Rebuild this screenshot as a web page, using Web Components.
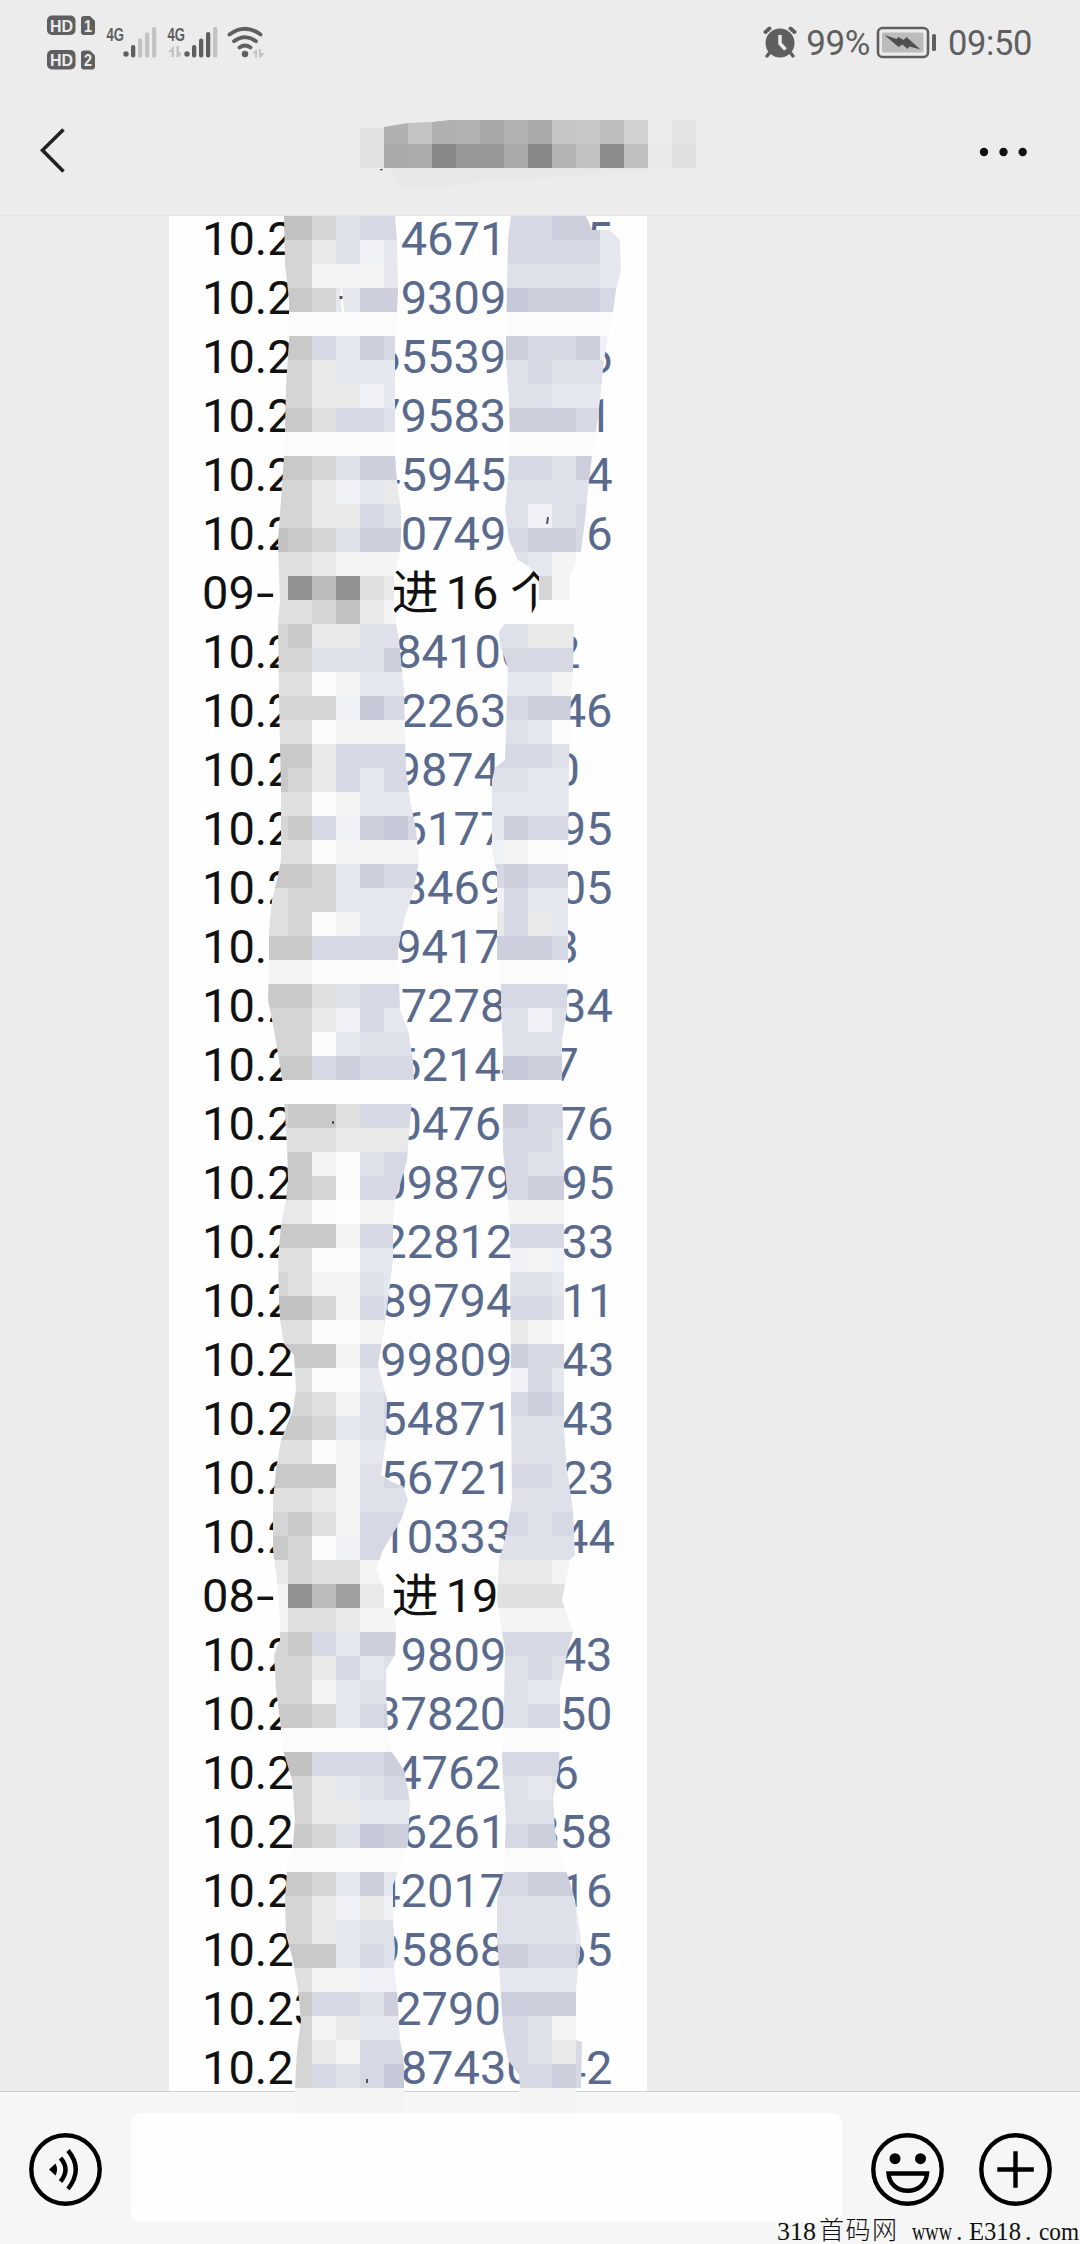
<!DOCTYPE html>
<html lang="zh-CN">
<head>
<meta charset="utf-8">
<meta name="viewport" content="width=device-width">
<title>聊天</title>
<style>
  html, body {
    margin: 0;
    background: #ececec;
  }
</style>
</head>
<body>
<chat-screen></chat-screen>

<script>
// helper: attach an open shadow root filled from a template
function attach(host, html) {
  const template = document.createElement('template')
  template.innerHTML = html
  host.attachShadow({ mode: 'open' }).appendChild(template.content.cloneNode(true))
  return host.shadowRoot
}

// [left text, right part, x of right part, tail, x of tail]
const ROWS = [
  ['10.2', '4671', 400.7, '5', 586.2],
  ['10.2', '9309', 400.7, '', 586],
  ['10.2', '65539', 374.2, '6', 586.2],
  ['10.2', '79583', 374.2, '1', 586.2],
  ['10.2', '45945', 374.2, '4', 586.2],
  ['10.2', '0749', 400.7, '6', 586.2],
  ['09-', '进', 391.5, '16 个', 445.7],
  ['10.2', '84100', 395.2, '2', 554],
  ['10.2', '2263', 400.7, '46', 559.7],
  ['10.2', '9874', 394.5, '0', 553.5],
  ['10.2', '6177', 400.7, '95', 559.7],
  ['10.2', '3469', 400.7, '05', 559.7],
  ['10.2', '9417', 395.2, '3', 552.5],
  ['10.2', '7278', 400.7, '34', 560],
  ['10.2', '62144', 395.2, '7', 552.5],
  ['10.2', '0476', 395.5, '76', 560.5],
  ['10.2', '09879', 380.3, '95', 561.5],
  ['10.2', '22812', 380.3, '33', 561.5],
  ['10.2', '89794', 380.3, '11', 561.5],
  ['10.2', '99809', 380.3, '43', 561.5],
  ['10.2', '54871', 380.3, '43', 561.5],
  ['10.2', '56721', 380.3, '23', 561.5],
  ['10.2', '10333', 380.3, '44', 562],
  ['08-', '进', 391.5, '19', 445.7],
  ['10.2', '9809', 400.7, '43', 559.7],
  ['10.2', '37820', 374.2, '50', 559.7],
  ['10.2', '47620', 395.2, '6', 552.5],
  ['10.2', '6261', 400.7, '858', 533.2],
  ['10.2', '42017', 374.2, '16', 559.7],
  ['10.2', '95868', 374.2, '65', 559.7],
  ['10.23', '2790', 395.2, '', 560],
  ['10.2', '87430', 400.7, '42', 559.7]
]

const COLORS = {
  X: '#929292', Y: '#a0a0a0', Z: '#bcbcbc',
  a: '#c2c2c3', b: '#c9c9ca', c: '#d5d5d6', d: '#e0e0e1', e: '#e9e9ea', f: '#f4f4f5', g: '#fbfbfb', w: '#fefefe',
  A: '#c5c9d7', B: '#cdd0dc', C: '#d6d9e3', D: '#dee1e9', E: '#e6e8ef', F: '#f0f1f6'
}

// one string per 24px line, one letter per 24px cell
const LEFT_STRIP = {
  x: 264,
  cells: 'aacDCCC cceDFEE ccfffEE bbcEBBB ggggggg bbCEBCC cceEEEE cceeFEE bbdCCDD ggggggg bbcDBBB cceFEee cceeCDD abcDBBB ddeffff dXZXdef ddcaeff cbeeDDD ccDDDBB ddgfEEE cccFACC ddgffff bbeCCCC bceCECC ddgfEEE cbCFBAC ddgffff bbcEBCC dccEEEE dcgfEEE bbCCCCC ffggggg bbdDCCC cceFCEE ccgEDDD bbCBCCC wwwwwww cbbdCCC dddeeee cbfgDCC abcgCCB eegwfff bbbfCCC ddggEEE cdffDEE aacfCDD ddggfEE bbbfCDD ddggEEE bcdfDCC bbcEDCC ddgfEEE bbbfDCC ddefDDD cbdfCCC bcgFCCC ecddfff fXZYewg fddefff cbCEBBB cceCEDD ccfEDDD bbcECBB ggggggg aaCCCBB cceEDCD cceeEEE bbcDABB ggggggg bbcEBEE cceFeFF cceEDDD bbbECDD ddffFFF bbCCDBC ccfeEEE ccefCCC ccCDCAA',
  edge: '284,216 285,264 289,300 289,340 286,385 285,430 284,456 281,500 278,540 279,575 280,600 278,620 279,700 281,790 281,860 277,880 272,900 269,930 269,960 268,1000 274,1030 279,1060 283,1085 286,1130 287,1150 288,1180 286,1200 281,1225 278,1260 279,1300 280,1320 284,1344 294,1355 296,1390 293,1410 281,1440 276,1470 273,1500 273,1550 277,1580 280,1620 280,1640 274,1655 276,1690 280,1720 283,1750 292,1780 295,1820 293,1845 287,1870 285,1900 286,1935 293,1960 298,1990 301,2020 297,2050 295,2088 404,2088 404,2060 400,2040 397,1990 394,1968 395,1950 393,1920 393,1885 398,1872 408,1845 410,1800 404,1770 392,1752 388,1730 386,1690 386,1670 395,1655 396,1632 394,1610 385,1590 376,1570 383,1550 401,1520 408,1500 403,1486 392,1482 381,1475 386,1440 387,1400 378,1365 384,1330 388,1300 393,1260 393,1224 395,1200 400,1185 407,1160 411,1110 414,1080 413,1060 408,1030 400,1010 398,950 404,920 414,890 419,860 416,830 410,800 406,770 404,690 399,640 394,610 394,576 400,552 401,540 401,510 398,490 395,460 395,340 397,312 398,290 397,240 395,216'
}
const RIGHT_STRIP = {
  x: 480,
  cells: 'CCCBBE CCCCCE DDDDDE BABBBC gggggg BBCCBF DDCDDD DDDEEE BBBBCC gggggg CCCDBB DDDDDD DDFDCC CCBBCC DDEfww wwcfww wwwwww DDeeCC CCCCCC EEEfff CCBBBB DDEggg CCCDCC DDEEBB EEEEEE EBCCCC Ffgggg CBCCCC FCEEEE eCeEEE BBBCCC gggggg CCCCCC DDFDDD DDDDDD AABBCC wwwwww BBCCCC CCCDDD CCDDDD CCBBBB ffffff CCCCCC FFfFFF DDDEEE CCCDDD eefggg BBCCCC FFCEEE CCBCCC DDDDDD DDDDDD CCCDDD DDDDDD CCDCCC DDDDDD eeefff ddddfg ffffgg CCCCCC DDCDDD DDEEEE DDCCCC gggggg CCCCCC DDEDDD DDDDDD CCBBBB gggggg CCBBCC DDDDEE DDDDEE BBCCBB EEEEEE BBBBAA CCDfDD CCDeCC CCCBCC',
  edge: '511,216 508,240 506,340 506,360 509,400 510,440 508,480 505,510 509,540 518,560 528,566 539,576 539,600 530,617 506,622 499,632 500,645 504,656 508,668 505,760 495,768 492,780 492,850 495,864 497,870 497,960 501,975 501,1010 503,1050 503,1150 507,1190 510,1225 511,1400 512,1500 505,1540 499,1560 497,1600 502,1632 505,1650 504,1700 502,1760 506,1820 504,1870 497,1900 497,1940 500,1980 503,2030 508,2060 519,2075 520,2088 581,2088 582,2042 576,2040 576,1992 578,1968 581,1940 575,1900 566,1870 558,1848 555,1830 553,1797 559,1770 560,1730 560,1690 568,1650 573,1632 562,1600 570,1560 575,1555 573,1510 567,1470 564,1430 564,1260 564,1180 562,1080 562,1040 567,1010 568,960 568,880 569,760 571,700 573,670 574,624 572,620 570,600 570,576 581,552 585,520 588,490 592,456 595,440 600,400 604,360 608,336 613,312 616,290 621,270 620,240 610,230 592,230 586,216'
}

class StatusBar extends HTMLElement {
  constructor() {
    super()
    attach(this, `
      <style>
        :host {
          display: flex;
          justify-content: space-between;
          height: 84px;
          color: #5f5f5f;
          font: 35px/87px Roboto, sans-serif;
        }
        svg { display: block; }
        .hd { font: bold 17px "Liberation Sans", sans-serif; fill: #ececec; }
        .net { font: bold 17.5px "Liberation Sans", sans-serif; }
        .right { display: flex; padding-right: 48px; }
        .right svg { flex: none; }
        .clock { margin-left: 12px; font-size: 34.5px; }
        .level { margin-left: 9px; }
        .level, .clock { letter-spacing: -.4px; }
      </style>
      <svg width="280" height="84" fill="#5f5f5f">
        <rect x="47" y="15.5" width="28.5" height="19.5" rx="5"/>
        <path d="M84 16h6l5 5v11a3 3 0 0 1-3 3h-8a3 3 0 0 1-3-3V19a3 3 0 0 1 3-3z"/>
        <rect x="47" y="50" width="28.5" height="19.5" rx="5"/>
        <path d="M84 50.500h6l5 5v11a3 3 0 0 1-3 3h-8a3 3 0 0 1-3-3v-13a3 3 0 0 1 3-3z"/>
        <g class="hd">
          <text x="50" y="31.500" textLength="23" lengthAdjust="spacingAndGlyphs">HD</text>
          <text x="84" y="31.500" textLength="8" lengthAdjust="spacingAndGlyphs">1</text>
          <text x="50" y="66" textLength="23" lengthAdjust="spacingAndGlyphs">HD</text>
          <text x="84" y="66" textLength="8" lengthAdjust="spacingAndGlyphs">2</text>
        </g>
        <g class="net">
          <text x="106.500" y="40.500" textLength="17.500" lengthAdjust="spacingAndGlyphs">4G</text>
          <text x="167.500" y="40.500" textLength="17.500" lengthAdjust="spacingAndGlyphs">4G</text>
        </g>
        <circle cx="126" cy="54" r="2.700"/>
        <rect x="131" y="45" width="4.300" height="12.500" rx="2"/>
        <g fill="#c3c3c3">
          <rect x="138" y="38.500" width="4.300" height="19" rx="1.500"/>
          <rect x="145" y="32.500" width="4.300" height="25" rx="1.500"/>
          <rect x="152" y="27" width="4.300" height="30.500" rx="1.500"/>
          <rect x="213" y="27" width="4.300" height="30.500" rx="1.500"/>
          <path d="M174 46v11h-2.500v-5H168zM176.500 46v11h2.500l3-4.500h-3V46zM257 49v8.500h-2v-4h-3zM259 49v8.500h2l3.500-4.500H261v-4z"/>
        </g>
        <circle cx="187" cy="54" r="2.700"/>
        <rect x="192" y="45" width="4.300" height="12.500" rx="2"/>
        <rect x="199" y="38.500" width="4.300" height="19" rx="2"/>
        <rect x="206" y="32" width="4.300" height="25.500" rx="2"/>
        <circle cx="245" cy="54" r="3.200"/>
        <g fill="none" stroke="#5f5f5f" stroke-width="3.800" stroke-linecap="round">
          <path d="M229.500 34.500q15.500-11.500 31 0M234 41.200q11-8.200 22 0M239.500 47.500q5.500-4 11 0"/>
        </g>
      </svg>
      <div class="right">
        <svg width="34" height="62" fill="#5f5f5f">
          <circle cx="17" cy="43" r="14.500"/>
          <path d="M8 51l-4 5M26 51l4 5" stroke="#5f5f5f" stroke-width="3.500" stroke-linecap="round"/>
          <path d="M2.500 32l4-3.500M31.500 32l-4-3.500" stroke="#5f5f5f" stroke-width="4" stroke-linecap="round"/>
          <path d="M17 35v8.500l5.500 6" fill="none" stroke="#ececec" stroke-width="3.500"/>
        </svg>
        <span class="level">99%</span>
        <svg width="66" height="62">
          <rect x="8" y="28" width="50" height="29" rx="4.500" fill="none" stroke="#5f5f5f" stroke-width="2.600"/>
          <rect x="12" y="32.500" width="41.500" height="20" rx="1.500" fill="#bcbcbc"/>
          <path d="M14.500 35l12 4 2-2 5 3 3-3 14 12.500-11-3-2 2.500-5-4.500-4 2.500z" fill="#4f4f4f"/>
          <rect x="62" y="34" width="4" height="17" rx="1.500" fill="#5f5f5f"/>
        </svg>
        <span class="clock">09:50</span>
      </div>
    `)
  }
}
customElements.define('status-bar', StatusBar)

class NavBar extends HTMLElement {
  constructor() {
    super()
    const root = attach(this, `
      <style>
        :host {
          display: flex;
          height: 131px;
          border-bottom: 1px solid #e3e3e3;
        }
        svg { display: block; }
      </style>
      <svg width="1080" height="131" viewBox="0 84 1080 131">
        <path d="M63.500 129.500l-21 20.700 21 21.300" fill="none" stroke="#222" stroke-width="3.600"/>
        <path d="M390 168h258v6q-60 0-165 8-48 8-78 6-8-6-15-20z" fill="#e7e7e7" opacity=".7"/>
        <clipPath id="name"><path d="M360 128h24v-1l24-4 24-1 18-2h246v48H360z"/></clipPath>
        <g id="blocks" clip-path="url(#name)" shape-rendering="crispEdges"></g>
        <path d="M380 169h3l-2 2z" fill="#333"/>
        <g fill="#111">
          <circle cx="984" cy="152" r="4.200"/>
          <circle cx="1003.500" cy="152" r="4.200"/>
          <circle cx="1022.700" cy="152" r="4.200"/>
        </g>
      </svg>
    `)
    const tones = [
      'e1 b0 c3 b0 b2 a8 b1 a9 c6 c8 bd d2 eb e4',
      'e1 aa ab 88 98 98 a9 88 b4 c2 8b bf e9 e0'
    ]
    root.querySelector('#blocks').innerHTML = tones.map((line, r) =>
      line.split(' ').map((t, c) =>
        `<rect x="${360 + c * 24}" y="${120 + r * 24}" width="24" height="24" fill="#${t + t + t}"/>`
      ).join('')
    ).join('')
  }
}
customElements.define('nav-bar', NavBar)

class ChatLine extends HTMLElement {
  constructor() {
    super()
    attach(this, `
      <style>
        :host {
          display: grid;
          grid-template-columns: var(--mid) var(--tail) auto;
          height: 59px;
          white-space: pre;
          color: #111;
        }
        ::slotted(.link) { color: #5a6a8d; }
      </style>
      <slot></slot>
    `)
  }
}
customElements.define('chat-line', ChatLine)

class ChatBubble extends HTMLElement {
  constructor() {
    super()
    const left = 202
    const lines = ROWS.map(([head, mid, midX, tail, tailX]) => {
      const isDate = head.endsWith('-')
      const cls = isDate ? '' : 'link'
      const start = isDate ? `${head.slice(0, -1)}<span class="dash">-</span>` : head
      return `<chat-line style="--mid:${(midX - left).toFixed(1)}px;--tail:${(tailX - midX).toFixed(1)}px">` +
        `<span>${start}</span><span class="${cls}">${mid}</span><span class="${cls}">${tail}</span></chat-line>`
    }).join('')
    attach(this, `
      <style>
        :host {
          display: block;
          width: 445px;
          height: 1875px;
          margin-left: 169px;
          padding-left: 33px;
          background: #fefefe;
          font: 47px/59px Roboto, "Noto Sans CJK SC", sans-serif;
        }
        .lines { margin-top: -7px; }
        .dash {
          display: inline-block;
          transform: scaleX(1.4);
          transform-origin: -3px 0;
        }
      </style>
      <div class="lines">${lines}</div>
    `)
  }
}
customElements.define('chat-bubble', ChatBubble)

// blocks of 24px cut to the outline of a brush stroke
class MosaicLayer extends HTMLElement {
  constructor() {
    super()
    attach(this, `
      <style>
        :host {
          display: block;
          position: absolute;
          top: 0;
          left: 0;
          pointer-events: none;
        }
        svg { display: block; }
      </style>
      <svg width="1080" height="2244">
        ${this.strip(LEFT_STRIP, 'l')}
        ${this.strip(RIGHT_STRIP, 'r')}
        <g fill="#f4f4f5">
          <rect x="295" y="2088" width="109" height="25"/>
          <rect x="519" y="2088" width="57" height="25"/>
        </g>
        <path d="M340 290l2 22h2l-2-24z" fill="#fff"/>
        <path d="M339.500 296h3v3h-3zM547 517h2l-1 7h-2zM332 1121h2v3h-2zM366 2079h2v4h-2z" fill="#555"/>
      </svg>
    `)
  }

  strip({ x, cells, edge }, id) {
    const rects = cells.split(' ').map((line, r) =>
      [...line].map((k, c) =>
        `<rect x="${x + c * 24}" y="${216 + r * 24}" width="24" height="24" fill="${COLORS[k]}"/>`
      ).join('')
    ).join('')
    return `<clipPath id="${id}"><polygon points="${edge}"/></clipPath>
      <g clip-path="url(#${id})" shape-rendering="crispEdges">${rects}</g>`
  }
}
customElements.define('mosaic-layer', MosaicLayer)

class InputBar extends HTMLElement {
  constructor() {
    super()
    attach(this, `
      <style>
        :host {
          display: flex;
          box-sizing: border-box;
          height: 153px;
          padding: 21px 28px 0 29px;
          border-top: 1px solid #cfcfcf;
          background: #f6f6f6;
        }
        svg { flex: none; margin-top: 20px; }
        .field {
          flex: 1;
          height: 109px;
          margin: 0 29px;
          border-radius: 9px;
          background: #fefefe;
        }
        .plus { margin-left: 35px; }
      </style>
      <svg width="73" height="73" viewBox="0 0 73 73" fill="none" stroke="#000" stroke-width="4.400">
        <circle cx="36.500" cy="36.500" r="34.200"/>
        <path d="M20 36.500l6.500-6q3 6 0 12z" fill="#000" stroke="none"/>
        <path d="M31.500 25q10 11.500 0 23.500M39 17.500q15.500 18.500 0 38.500"/>
      </svg>
      <div class="field"></div>
      <svg width="73" height="73" viewBox="0 0 73 73" fill="none" stroke="#000" stroke-width="4.400">
        <circle cx="36.500" cy="36.500" r="34.200"/>
        <circle cx="24" cy="25.700" r="5.500" fill="#000" stroke="none"/>
        <circle cx="49.500" cy="25.700" r="5.500" fill="#000" stroke="none"/>
        <path d="M17.500 40.500h38.500c-1 11-9 17.300-19.300 17.300S18.500 51.500 17.500 40.500z"/>
      </svg>
      <svg class="plus" width="73" height="73" viewBox="0 0 73 73" fill="none" stroke="#000" stroke-width="4.400">
        <circle cx="36.500" cy="36.500" r="34.200"/>
        <path d="M36.500 18.300v36.500M18.300 36.500h36.500"/>
      </svg>
    `)
  }
}
customElements.define('input-bar', InputBar)

class SiteMark extends HTMLElement {
  constructor() {
    super()
    attach(this, `
      <style>
        :host {
          display: block;
          position: absolute;
          right: 0;
          bottom: 0;
        }
        svg { display: block; }
        text {
          font: 26px "Liberation Serif", "Noto Sans CJK SC", serif;
          fill: #111;
        }
        .cjk { font-family: "Noto Sans CJK SC", sans-serif; font-weight: 300; font-size: 25px; }
      </style>
      <svg width="304" height="30">
        <text x="1" y="26" textLength="39" lengthAdjust="spacingAndGlyphs">318</text>
        <text class="cjk" x="43" y="25" textLength="78">首码网</text>
        <text x="136" y="26" textLength="40" lengthAdjust="spacingAndGlyphs">www</text>
        <text x="180" y="26">.</text>
        <text x="193" y="26" textLength="52" lengthAdjust="spacingAndGlyphs">E318</text>
        <text x="249" y="26">.</text>
        <text x="263" y="26" textLength="40" lengthAdjust="spacingAndGlyphs">com</text>
      </svg>
    `)
  }
}
customElements.define('site-mark', SiteMark)

class ChatScreen extends HTMLElement {
  constructor() {
    super()
    attach(this, `
      <style>
        :host {
          display: flex;
          flex-direction: column;
          position: relative;
          width: 1080px;
          height: 2244px;
          overflow: hidden;
          background: #ececec;
        }
      </style>
      <status-bar></status-bar>
      <nav-bar></nav-bar>
      <chat-bubble></chat-bubble>
      <input-bar></input-bar>
      <mosaic-layer></mosaic-layer>
      <site-mark></site-mark>
    `)
  }
}
customElements.define('chat-screen', ChatScreen)
</script>
</body>
</html>
